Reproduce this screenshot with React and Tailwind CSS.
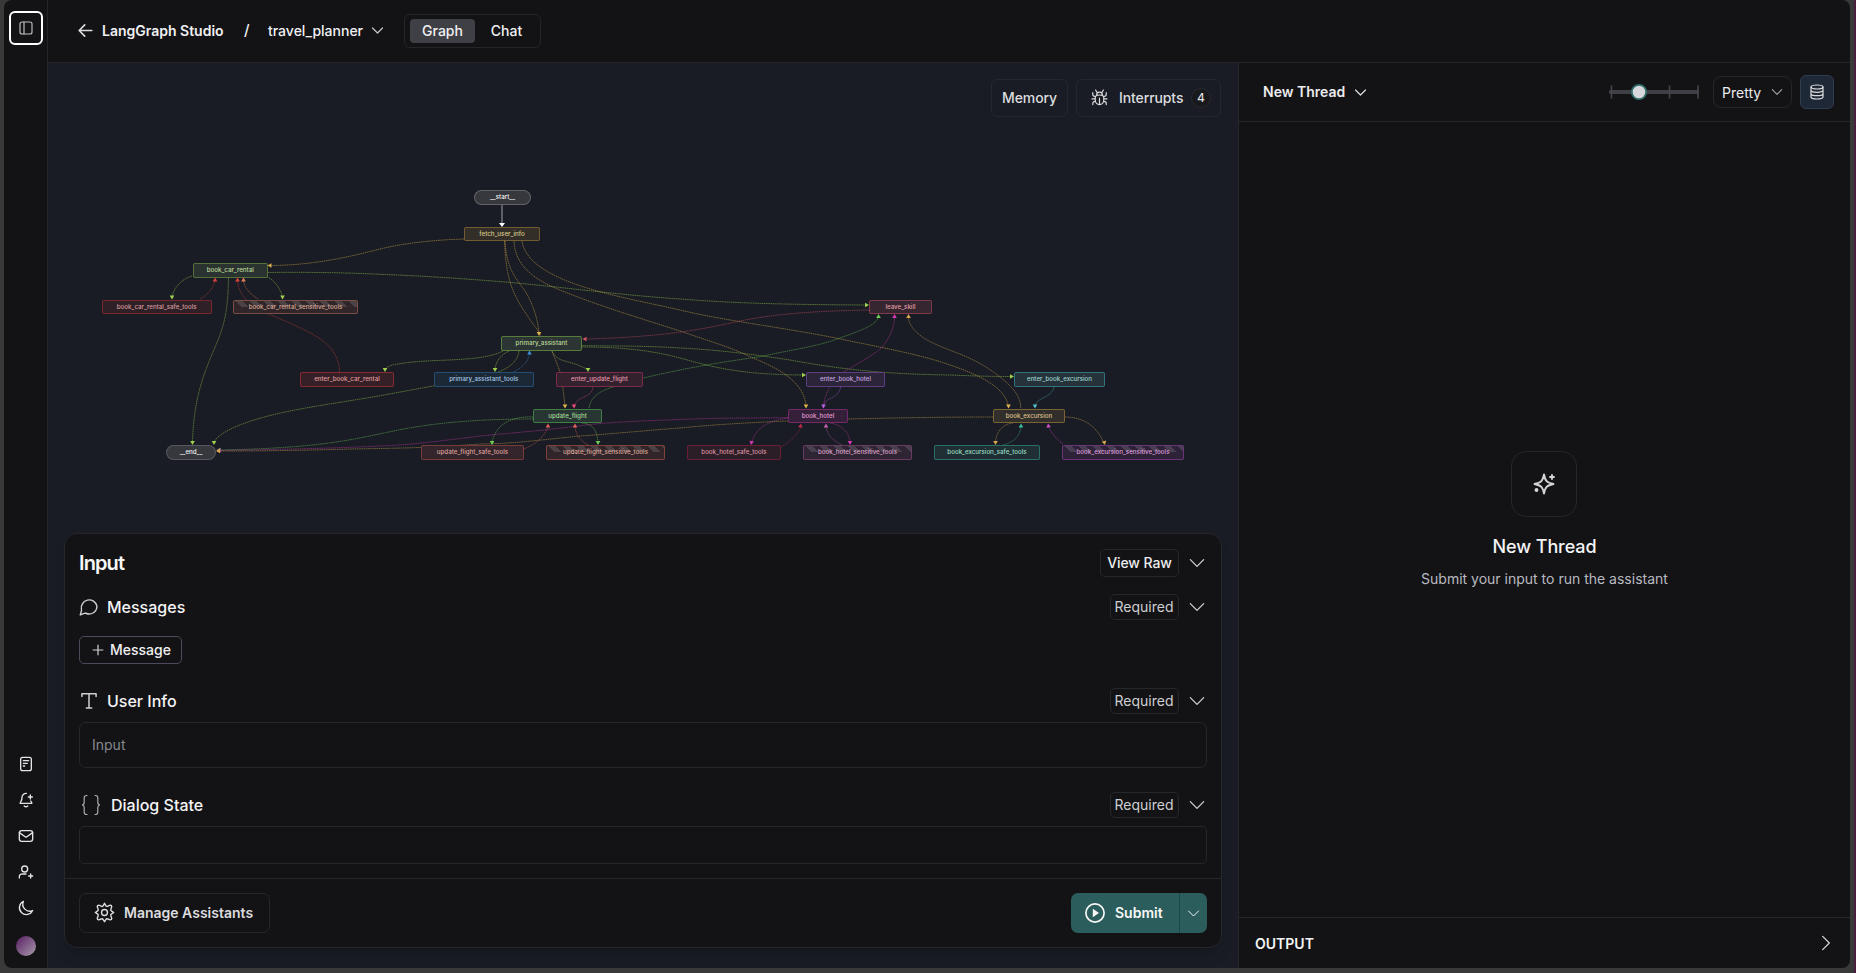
import React from "react";

const YELLOW = "#e0b44c";
const LIME = "#a0d24e";
const GREEN = "#6fcf57";
const RED = "#d9403c";
const ORANGE = "#e0805c";
const CORAL = "#e0625a";
const PINK = "#ef4a78";
const ROSE = "#d8506a";
const BLUE = "#3b8fdc";
const MAGENTA = "#d838b4";
const ORCHID = "#c94fcb";
const VIOLET = "#b060dc";
const CRIMSON = "#c02a4e";
const MAUVE = "#c860b0";
const CYAN = "#4fc4cc";
const TEAL = "#3cbf9c";
const AMBER = "#d8a850";

const nodes = [
  { t: "__start__", x: 474, y: 190, w: 57, h: 15, c: "border-[#6a6b70]/85 bg-[#36383e] text-[#f4f4f5] rounded-full" },
  { t: "fetch_user_info", x: 464, y: 227, w: 76, h: 14, c: "border-[#7d6531]/85 bg-[#332e27] text-[#dcc98f] rounded-[2px]" },
  { t: "book_car_rental", x: 192.5, y: 263, w: 75.5, h: 15, c: "border-[#5c7a3a]/85 bg-[#2b3330] text-[#bcd79a] rounded-[2px]" },
  { t: "book_car_rental_safe_tools", x: 102, y: 300, w: 109.5, h: 14, c: "border-[#86292f]/85 bg-[#2f1f27] text-[#d99c9c] rounded-[2px]" },
  { t: "book_car_rental_sensitive_tools", x: 233, y: 300, w: 125, h: 14, s: 1, c: "border-[#8a5546]/85 bg-[#30262a] text-[#dba995] rounded-[2px]" },
  { t: "leave_skill", x: 869, y: 300, w: 63, h: 14, c: "border-[#8c3d50]/85 bg-[#35262f] text-[#e09aa4] rounded-[2px]" },
  { t: "primary_assistant", x: 501, y: 336, w: 81, h: 15, c: "border-[#5f8a3d]/85 bg-[#2c3533] text-[#bcd79a] rounded-[2px]" },
  { t: "enter_book_car_rental", x: 300, y: 372, w: 94, h: 15, c: "border-[#962c31]/85 bg-[#352028] text-[#e09a9a] rounded-[2px]" },
  { t: "primary_assistant_tools", x: 433.5, y: 372, w: 100.5, h: 15, c: "border-[#28557f]/85 bg-[#1b2836] text-[#a3c6e6] rounded-[2px]" },
  { t: "enter_update_flight", x: 556, y: 372, w: 87, h: 15, c: "border-[#8c2c4d]/85 bg-[#33222e] text-[#e596ab] rounded-[2px]" },
  { t: "enter_book_hotel", x: 806, y: 372, w: 79, h: 15, c: "border-[#69428f]/85 bg-[#2c2539] text-[#c8a5e0] rounded-[2px]" },
  { t: "enter_book_excursion", x: 1014, y: 372, w: 91, h: 15, c: "border-[#337f86]/85 bg-[#263239] text-[#9dd2d2] rounded-[2px]" },
  { t: "update_flight", x: 533, y: 409, w: 69, h: 14, c: "border-[#458a45]/85 bg-[#273632] text-[#a5d79a] rounded-[2px]" },
  { t: "book_hotel", x: 788, y: 409, w: 60, h: 14, c: "border-[#7d2c73]/85 bg-[#35203a] text-[#e29bd2] rounded-[2px]" },
  { t: "book_excursion", x: 993, y: 409, w: 72, h: 14, c: "border-[#8a6c37]/85 bg-[#322e2b] text-[#dcc08f] rounded-[2px]" },
  { t: "__end__", x: 166, y: 445, w: 50, h: 15, c: "border-[#5c5e64]/85 bg-[#36383e] text-[#f4f4f5] rounded-full" },
  { t: "update_flight_safe_tools", x: 421, y: 445, w: 103, h: 15, c: "border-[#84403d]/85 bg-[#33252b] text-[#dca09a] rounded-[2px]" },
  { t: "update_flight_sensitive_tools", x: 546, y: 445, w: 119, h: 15, s: 1, c: "border-[#8c4640]/85 bg-[#31252a] text-[#dca595] rounded-[2px]" },
  { t: "book_hotel_safe_tools", x: 687, y: 445, w: 94, h: 15, c: "border-[#782037]/85 bg-[#2c1e27] text-[#da91a0] rounded-[2px]" },
  { t: "book_hotel_sensitive_tools", x: 803, y: 445, w: 109, h: 15, s: 1, c: "border-[#74406a]/85 bg-[#2e2434] text-[#dca0c8] rounded-[2px]" },
  { t: "book_excursion_safe_tools", x: 934, y: 445, w: 106, h: 15, c: "border-[#2c7a6c]/85 bg-[#1f2f34] text-[#9adbc4] rounded-[2px]" },
  { t: "book_excursion_sensitive_tools", x: 1062, y: 445, w: 122, h: 15, s: 1, c: "border-[#743884]/85 bg-[#2e2238] text-[#dc9cdc] rounded-[2px]" },
];

// Each edge: [colour, path, arrow tip x, arrow tip y, arrow direction in degrees (0 = right)]
const edges = [
  [YELLOW, "M464 239C430 240 400 244 380 249S320 265 272 265.5", 267.5, 265.5, 180],
  [LIME, "M268 272.5C300 272 345 272.5 380 274.3C425 276 470 279 513 282.7C570 288 620 295 680 299C720 302 760 304.5 866 305", 869, 305, 0],
  [LIME, "M192 276C182 279 174 287 172 297", 172, 299.5, 90],
  [RED, "M200 299C208 295 213 288 215 281", 215, 277.5, 270],
  [LIME, "M228.500 278C228 300 227 318 218 340C208 365 194 390 192.500 442", 192.5, 445, 90],
  [LIME, "M267 277C275 280 281 290 282.500 297", 282.5, 299.5, 90],
  [ORANGE, "M258 299C252 295 245 290 243.500 281", 243.5, 277.5, 270],
  [RED, "M339.500 372C339 345 315 335 292 324C265 312 240 305 237.500 281", 237.5, 277.5, 270],
  [LIME, "M503 351C480 363 430 358 398 364C390 365 386 367 385 370", 385, 372, 90],
  [LIME, "M519 351C517 375 470 380 433 386L380 395.700C350 401 320 405 290 411C260 417 222 428 214 442", 214, 445, 90],
  [LIME, "M509 351C500 355 496 362 495 369", 495, 372, 90],
  [BLUE, "M513 372C522 368 528 362 529.500 354", 529.5, 350.5, 270],
  [LIME, "M552 351C556 362 570 361 580 366C585 368 587 369 588 370", 588, 372, 90],
  [YELLOW, "M505 241C507 275 520 281 528 296C535 310 538 322 539 333", 539, 336, 90],
  [YELLOW, "M504.500 241C506 280 513 295 527 315C533 325 537 328 541 336C546 345 550 346 552 351C556 362 561 372 562 380C563 390 564 396 565 406", 565, 408.5, 90],
  [YELLOW, "M514 241C515 265 533 278 553 287C590 303 630 315 680 331C715 343 730 347 753 358C775 367 803 380 806 405", 806, 408.5, 90],
  [YELLOW, "M522 241C525 260 545 272 567 281C600 294 640 301 680 310C730 322 790 328 850 341C890 349 925 356 950 365C980 375 1005 388 1008 405", 1008.5, 408.5, 90],
  [ROSE, "M869 310C820 311 780 313 740 321C700 330 660 337 586 339", 582.5, 339, 180],
  [LIME, "M582 347C620 347 650 350 680 358C710 366 735 374.500 803 375", 806, 375, 0],
  [LIME, "M582 345.700C620 346 650 346 680 348C720 350 750 354 790 360C840 369 880 374 950 375C975 376 990 376.500 1011 376.500", 1014, 376.5, 0],
  [GREEN, "M589 408C591 395 603 390 613 387C625 382 650 376 680 370C710 364 730 361 760 356.700C790 350 815 347 837 339C860 331 876 325 878 318", 878.5, 314, 270],
  [PINK, "M593 387C592 398 577 396 574 406", 574, 408.5, 90],
  [GREEN, "M533 419C490 419 440 421 390 431.700C350 440 320 448 220 450", 216.5, 450, 180],
  [GREEN, "M533 417C510 416 496 425 492 442", 492, 445, 90],
  [CORAL, "M524 449C538 443 545 435 548 427", 548, 423.5, 270],
  [GREEN, "M582 423C595 424 597 433 598 442", 598, 445, 90],
  [CORAL, "M588 445C580 440 576 435 575 427", 575, 423.5, 270],
  [MAGENTA, "M788 417.700C750 418 710 418 680 419.500C640 421 610 422 580 425.700C540 431 510 433 480 436C440 441 410 445 380 446C340 448 300 449 220 450.500", 216.5, 450.5, 180],
  [AMBER, "M993 417C940 417 890 418 848 419C820 420 800 420 788 421C740 423 710 425 680 428C640 431 610 434 580 436C540 440 510 444 480 444C440 447 410 448 380 448.500C340 449 300 451 220 451", 216, 451, 180],
  [MAGENTA, "M823 408C825 396 827 392 830 387C835 378 840 374 847 370C860 362 873 356 883 346C890 337 894 328 894.500 318", 894.5, 314, 270],
  [VIOLET, "M840.700 387C838 400 826 396 823.500 406", 823.5, 408.5, 90],
  [MAGENTA, "M788 418C765 421 755 430 752 442", 751, 445, 100],
  [CRIMSON, "M781 447C793 440 798 433 801 427", 801, 423.5, 280],
  [MAGENTA, "M830 423C843 425 849 433 850 442", 850, 445, 90],
  [MAUVE, "M842 445C831 440 827 433 826 427", 826, 423.5, 270],
  [AMBER, "M1020.700 408C1021 395 1010 385 1000 377C990 369 980 363 967 357C953 351 940 347 927 340C917 334 909 326 908.500 318", 908.5, 314, 270],
  [CYAN, "M1054 387C1052 398 1037 397 1035 406", 1035, 408.5, 90],
  [AMBER, "M1013 423C1001 424 996 434 995.500 442", 995.5, 445, 90],
  [TEAL, "M1003 445C1015 442 1020 435 1021 427", 1021, 423.5, 270],
  [AMBER, "M1065 417C1085 417 1097 428 1103 441", 1105, 445, 75],
  [ORCHID, "M1063 444C1055 438 1051 432 1048.500 427", 1048, 423.5, 260],
];

const Svg = ({ className, sw = 2, children }) => (
  <svg viewBox="0 0 24 24" fill="none" stroke="currentColor" strokeWidth={sw} strokeLinecap="round" strokeLinejoin="round" className={className}>
    {children}
  </svg>
);

const ChevronDown = ({ className, sw = 1.6 }) => (
  <Svg className={className} sw={sw}><path d="M4 8l8 8 8-8" /></Svg>
);

function Graph() {
  return (
    <div className="absolute inset-0">
      <svg className="absolute inset-0" width="1190" height="460" viewBox="48 63 1190 460" fill="none">
        <path d="M502 204V224" stroke="#a1a1aa" strokeWidth="1" />
        <path d="M502 227l-3-4h6z" fill="#fff" />
        {edges.map(([c, d], i) => (
          <path key={i} d={d} stroke={c} strokeWidth="0.9" strokeOpacity="0.5" strokeDasharray="1.600 0.600" />
        ))}
      </svg>
      {nodes.map((n) => (
        <div
          key={n.t}
          style={{ left: n.x - 48, top: n.y - 63, width: n.w, height: n.h }}
          className={"absolute flex items-center justify-center overflow-hidden border whitespace-nowrap text-[6.200px] leading-none font-medium " + n.c}
        >
          {n.s ? (
            <span className="absolute inset-x-0 top-0 h-[6px] bg-[repeating-linear-gradient(45deg,transparent_0_5px,rgba(255,255,255,0.13)_5px_10px)]" />
          ) : null}
          <span className="relative">{n.t}</span>
        </div>
      ))}
      <svg className="absolute inset-0" width="1190" height="460" viewBox="48 63 1190 460">
        {edges.map(([c, , x, y, a], i) => (
          <path key={i} d="M0 0l-4-2.300v4.600z" fill={c} transform={`translate(${x} ${y}) rotate(${a})`} />
        ))}
      </svg>
    </div>
  );
}

function Sidebar() {
  return (
    <aside className="flex w-[44px] shrink-0 flex-col items-center justify-between border-r border-[#242528] pt-[11px] pb-3 text-[#e4e4e7]">
      <button className="flex size-[34px] items-center justify-center rounded-[6px] border-2 border-white text-[#bdbdc1]">
        <Svg className="size-4" sw={1.8}>
          <rect x="3" y="3" width="18" height="18" rx="3" />
          <path d="M9 3v18" />
        </Svg>
      </button>
      <div className="flex flex-col items-center gap-5">
        <Svg className="size-4"><rect x="4" y="2" width="16" height="20" rx="3" /><path d="M8 7h8M8 11h6M8 15h2" /></Svg>
        <Svg className="size-4"><path d="M9.400 21a4 4 0 0 0 5.200 0M18.500 4.500v6M15.500 7.500h6M12.500 2.100A6 6 0 0 0 6 8c0 3.100-.8 5.200-1.700 6.600-.7 1.200-1.100 1.800-1.100 1.900.1.400.5.500 1 .5h15.600c.5 0 .9-.1 1-.5 0-.2-.4-.8-1.100-1.900-.2-.3-.4-.7-.6-1.100" /></Svg>
        <Svg className="size-4"><rect x="2" y="4" width="20" height="16" rx="3.500" /><path d="M2 7l8.200 5.700c.7.500 1 .7 1.400.8h.8c.4-.1.700-.3 1.400-.8L22 7" /></Svg>
        <Svg className="size-4"><path d="M19 21v-6M16 18h6M12 15H8c-1.900 0-2.800 0-3.500.2a4 4 0 0 0-2.300 2.300C2 18.200 2 19.100 2 21" /><circle cx="10" cy="7.500" r="4.500" /></Svg>
        <Svg className="size-4"><path d="M22 15.800A10.400 10.400 0 0 1 8.200 2 10.400 10.400 0 1 0 22 15.800z" /></Svg>
        <span className="size-5 rounded-full bg-linear-to-br from-[#571a63] to-[#a79ca9]" />
      </div>
    </aside>
  );
}

function Header() {
  return (
    <header className="flex h-[63px] shrink-0 items-center border-b border-[#242528] pb-px pl-[28px] text-[15px] text-[#f0f0f2]">
      <Svg className="size-[19px] text-[#dcdcdf]" sw={2.1}><path d="M20 12H4M11 19l-7-7 7-7" /></Svg>
      <span className="ml-[7px] w-[142px] text-[14px] font-semibold">LangGraph Studio</span>
      <span className="w-[24px] text-[15px] font-medium">/</span>
      <span className="w-[102px] text-[14px] font-medium">travel_planner</span>
      <ChevronDown className="size-[15px] text-[#c8c8cc]" sw={1.9} />
      <div className="ml-[19px] flex h-[34px] items-center rounded-[6px] border border-[#242528] p-[5px] text-[14px] font-medium">
        <span className="flex h-6 w-[65px] items-center justify-center rounded-[4px] bg-[#3f4046]">Graph</span>
        <span className="flex h-6 w-[60px] items-center justify-center pl-[3px]">Chat</span>
      </div>
    </header>
  );
}

const Section = ({ icon, label, gap, children, className }) => (
  <section className={className}>
    <div className="flex h-[26px] items-center justify-between">
      <div className={"flex items-center text-[16px] font-medium text-[#f4f4f5] " + gap}>
        {icon}
        {label}
      </div>
      <div className="flex items-center gap-2">
        <span className="flex h-[26px] w-[69px] items-center justify-center rounded-[5px] border border-[#26272a] pr-px pb-[2px] text-[14px] text-[#cecfd2]">Required</span>
        <ChevronDown className="size-5 text-[#d4d4d8]" sw={1.5} />
      </div>
    </div>
    {children}
  </section>
);

function InputPanel() {
  return (
    <div className="relative flex h-[415px] flex-col rounded-[13px] border border-[#26272a] bg-[#131315] shadow-lg">
      <div className="flex h-[345px] shrink-0 flex-col border-b border-[#26272a] px-[14px] pt-[15px]">
        <div className="flex h-7 items-center justify-between">
          <h2 className="text-[20px] font-semibold tracking-[-0.9px] text-[#f7f7f7]">Input</h2>
          <div className="flex items-center gap-2">
            <button className="h-7 w-[79px] rounded-[5px] border border-[#26272a] pb-[2px] text-[14px] font-medium tracking-[-0.1px] text-[#ececee]">View Raw</button>
            <ChevronDown className="size-5 text-[#d4d4d8]" sw={1.5} />
          </div>
        </div>
        <Section
          className="mt-[17px]"
          gap="gap-2"
          label="Messages"
          icon={<Svg className="size-5 text-[#cecfd2]" sw={1.7}><path d="M21.500 11a9.300 9.300 0 0 1-13.200 8.500c-.5-.2-.8-.2-1.100-.2L1.500 21.500l1.500-5c.1-.6.100-.8-.1-1.500A9.300 9.300 0 1 1 21.500 11z" /></Svg>}
        >
          <button className="mt-4 flex h-7 w-[103px] items-center gap-[6px] rounded-[5px] border border-[#4c4b5c] pb-[2px] pl-3 text-[14px] font-medium text-[#f0f0f2]">
            <svg viewBox="0 0 12 12" className="mt-[2px] size-3" stroke="#d4d4d8" strokeWidth="1.200"><path d="M6 .7v10.600M.7 6h10.600" /></svg>
            Message
          </button>
        </Section>
        <Section
          className="mt-6"
          gap="gap-2"
          label="User Info"
          icon={<Svg className="size-5 text-[#cecfd2]" sw={1.8}><path d="M3.500 6.500V3.200h17v3.300M12 3.200V20.500M8.800 20.500h6.400" /></Svg>}
        >
          <div className="mt-2 flex h-[46px] items-center rounded-[7px] border border-[#26272a] pb-[2px] pl-3 text-[14px] text-[#85888e]">Input</div>
        </Section>
        <Section
          className="mt-6"
          gap="gap-[10px]"
          label="Dialog State"
          icon={
            <svg viewBox="0 0 22 22" className="size-[22px] text-[#a9aaae]" fill="none" stroke="currentColor" strokeWidth="1.200">
              <path d="M8.500 1.500H7.500Q5.200 1.500 5.200 4V8Q5.200 11 3 11Q5.200 11 5.200 14V18Q5.200 20.500 7.500 20.500H8.500M15.500 1.500H16.500Q18.800 1.500 18.800 4V8Q18.800 11 21 11Q18.800 11 18.800 14V18Q18.800 20.500 16.500 20.500H15.500" />
            </svg>
          }
        >
          <div className="mt-2 h-[38px] rounded-[5px] border border-[#26272a]" />
        </Section>
      </div>
      <div className="flex flex-1 items-start justify-between px-[14px] pt-[14px]">
        <button className="flex h-10 w-[191px] items-center gap-[9px] rounded-[7px] border border-[#26272a] pb-px pl-[14px] text-[14px] font-semibold text-[#dcdcdf]">
          <Svg className="size-[21px]" sw={1.6}>
            <circle cx="12" cy="12" r="3.400" />
            <path d="M12 1.500l1.500 2.600c.5.800 1.500 1.100 2.300.6L18.500 3.600c.8 0 1.800 1 1.800 1.800l-1 2.700c-.4.900 0 1.900.8 2.300L22.500 12l-2.400 1.600c-.8.500-1.200 1.500-.8 2.300l1 2.700c0 .8-1 1.800-1.800 1.800l-2.700-1c-.8-.4-1.800-.1-2.300.8L12 22.500l-1.500-2.300c-.5-.9-1.500-1.200-2.300-.8l-2.700 1c-.8 0-1.800-1-1.800-1.800l1-2.700c.4-.800 0-1.800-.8-2.300L1.500 12l2.400-1.600c.8-.4 1.200-1.400.8-2.300l-1-2.700c0-.8 1-1.800 1.800-1.800l2.700 1.100c.8.500 1.800.2 2.300-.6z" />
          </Svg>
          Manage Assistants
        </button>
        <div className="flex h-10 w-[136px] overflow-hidden rounded-[7px] bg-[#2b5d5c] text-[#f7f7f7]">
          <button className="flex w-[109px] items-center gap-[10px] border-r border-[#1f4948] pb-px pl-[14px] text-[14px] font-semibold">
            <svg viewBox="0 0 20 20" className="size-5"><circle cx="10" cy="10" r="9.100" fill="none" stroke="currentColor" strokeWidth="1.700" /><path d="M7.800 5.800L14 10l-6.200 4.200z" fill="currentColor" /></svg>
            Submit
          </button>
          <button className="flex flex-1 items-center justify-center pr-px"><ChevronDown className="size-[15px]" /></button>
        </div>
      </div>
    </div>
  );
}

function Canvas() {
  return (
    <main className="relative flex w-[1190px] shrink-0 flex-col justify-between bg-[#191c24] px-4 pt-4 pb-5">
      <Graph />
      <div className="relative flex justify-end gap-2 pr-px text-[14px] font-medium text-[#dcdcdf]">
        <button className="h-[38px] w-[77px] rounded-[6px] border border-[#25272c] pb-[2px] tracking-[-0.1px]">Memory</button>
        <button className="flex h-[38px] w-[145px] items-center rounded-[6px] border border-[#25272c] pb-px pl-[14px]">
          <Svg className="size-[17px]" sw={1.7}>
            <path d="M6 12.500C6 10 8 8.500 12 8.500s6 1.500 6 4V16a6 6 0 0 1-12 0zM12 13v9M8 8.500a4 4 0 0 1 8 0M8.500 5L6.500 1.500M15.500 5l2-3.500M1.500 14H6M18 14h4.500M2.500 22v-1.500a3 3 0 0 1 3-3H6M21.500 22v-1.500a3 3 0 0 0-3-3H18M2.500 5v2.500a3 3 0 0 0 3 3H6.500M21.500 5v2.500a3 3 0 0 1-3 3H17.500" />
          </Svg>
          <span className="ml-[11px] w-[72px] text-left tracking-[-0.1px]">Interrupts</span>
          <span className="flex size-5 items-center justify-center rounded-full border border-[#29292d] bg-[#18191d] text-[12px]">4</span>
        </button>
      </div>
      <InputPanel />
    </main>
  );
}

function ThreadPanel() {
  return (
    <section className="flex flex-1 flex-col border-l border-[#26272a]">
      <div className="flex h-[59px] shrink-0 items-center border-b border-[#26272a] pr-4 pl-6">
        <span className="pb-[2px] text-[14px] font-semibold text-[#ececee]">New Thread</span>
        <ChevronDown className="ml-[8px] size-[15px] text-[#dcdcdf]" sw={1.9} />
        <svg width="94" height="18" viewBox="0 0 94 18" className="ml-auto">
          <rect x="2" y="7" width="90" height="4" rx="1.500" fill="#3f4046" />
          <path d="M4.500 2.500v13M62.500 2.500v13M91 2.500v13" stroke="#46474e" strokeWidth="1.600" />
          <circle cx="32" cy="9" r="7.200" fill="#d7d7db" stroke="#2d6b68" strokeWidth="1.800" />
        </svg>
        <button className="ml-[12px] flex h-8 w-[79px] items-center justify-between rounded-[8px] border border-[#26272a] pr-[7px] pl-2 text-[14px] text-[#ececee]">
          Pretty
          <ChevronDown className="size-[14px] text-[#9c9da3]" sw={2} />
        </button>
        <button className="ml-2 flex size-[34px] items-center justify-center rounded-[6px] border border-[#303c4f] bg-[#1f2836] text-[#dcdcdf]">
          <Svg className="size-4" sw={1.8}>
            <ellipse cx="12" cy="4.500" rx="9" ry="3" />
            <path d="M3 4.500V19.500c0 1.700 4 3 9 3s9-1.300 9-3V4.500M3 9.500c0 1.700 4 3 9 3s9-1.300 9-3M3 14.500c0 1.700 4 3 9 3s9-1.300 9-3" />
          </Svg>
        </button>
      </div>
      <div className="flex flex-1 flex-col items-center justify-center pt-[1px] pr-px">
        <div className="flex size-[66px] items-center justify-center rounded-[15px] border border-[#26272a] text-[#d4d4d8]">
          <Svg className="size-6" sw={1.9}>
            <path d="M12 2.500c1.300 6.500 2.500 8 9.500 9.500-7 1.500-8.200 3-9.500 9.500C10.700 15 9.500 13.500 2.500 12 9.500 10.500 10.700 9 12 2.500z" />
            <path d="M20 3v4M22 5h-4" />
            <circle cx="4.500" cy="18" r="1" />
          </Svg>
        </div>
        <h3 className="mt-4 pl-px text-[18px] leading-7 font-medium tracking-[-0.1px] text-[#f4f4f5]">New Thread</h3>
        <p className="mt-2 pl-px text-[14px] leading-5 text-[#b9bac0]">Submit your input to run the assistant</p>
      </div>
      <div className="flex h-[51px] shrink-0 items-center justify-between border-t border-[#26272a] pr-[14px] pl-4">
        <span className="text-[14px] font-semibold text-[#f4f4f5]">OUTPUT</span>
        <Svg className="size-5 text-[#d4d4d8]" sw={1.5}><path d="M8 4l8 8-8 8" /></Svg>
      </div>
    </section>
  );
}

export default function App() {
  return (
    <div className="h-[973px] w-[1856px] overflow-hidden border-r-2 border-[#4b1d3f] bg-[#39393a] pr-1 pb-[5px] pl-1 font-['Inter',sans-serif]">
      <div className="flex h-[968px] overflow-hidden rounded-[8px] bg-[#131315]">
        <Sidebar />
        <div className="flex flex-1 flex-col">
          <Header />
          <div className="flex flex-1">
            <Canvas />
            <ThreadPanel />
          </div>
        </div>
      </div>
    </div>
  );
}
